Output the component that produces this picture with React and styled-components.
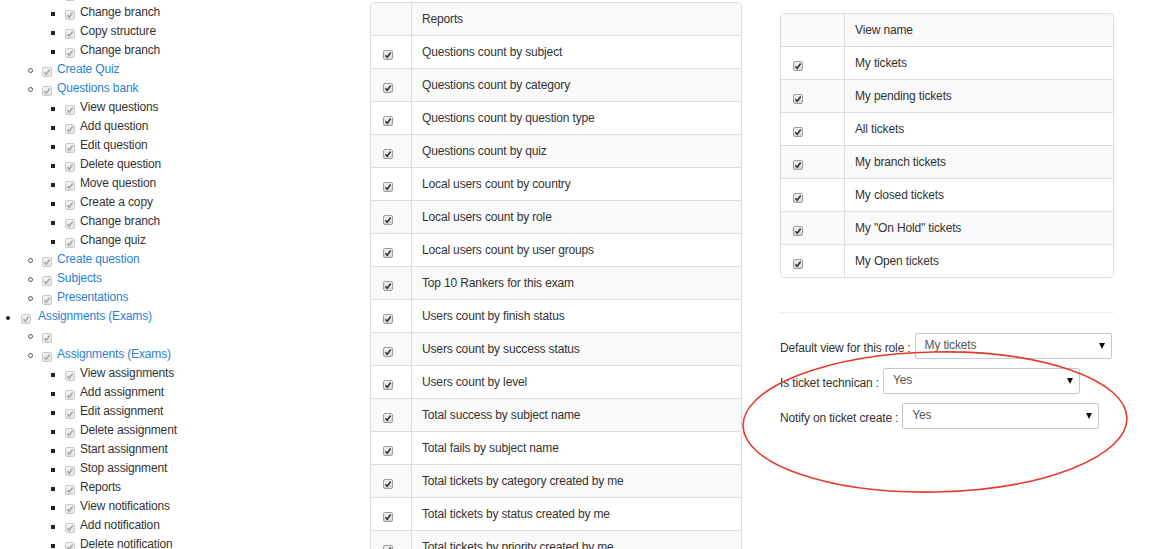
import React from "react";
import styled, { createGlobalStyle } from "styled-components";

const GlobalStyle = createGlobalStyle`
  html, body {
    margin: 0;
    padding: 0;
    background: #fff;
    overflow: hidden;
  }
  body {
    font-family: "Liberation Sans", Arial, sans-serif;
    font-size: 12px;
    letter-spacing: -0.15px;
    color: #333;
  }
`;

const Page = styled.div`
  position: relative;
  display: flex;
  align-items: flex-start;
  width: 1170px;
  height: 549px;
  overflow: hidden;
`;

/* ---------- left permission tree ---------- */

const TreeCol = styled.div`
  width: 370px;
  flex-shrink: 0;
  margin-top: -16px;
`;

const LEVELS = {
  1: { left: 6, size: 4, cb: 11, label: 7 },
  2: { left: 28, size: 5, cb: 9, label: 5 },
  3: { left: 51, size: 4, cb: 10, label: 5 },
};

const TreeRow = styled.div`
  display: flex;
  align-items: center;
  height: 19px;
  padding-left: ${(p) => LEVELS[p.$level].left}px;
`;

const Bullet = styled.span`
  flex-shrink: 0;
  width: ${(p) => LEVELS[p.$level].size}px;
  height: ${(p) => LEVELS[p.$level].size}px;
  margin-top: 2px;
  box-sizing: border-box;
  background: ${(p) => (p.$level === 2 ? "transparent" : "#222")};
  border: ${(p) => (p.$level === 2 ? "1px solid #555" : "none")};
  border-radius: ${(p) => (p.$level === 3 ? "0" : "50%")};
`;

const TreeLabel = styled.span`
  margin-left: ${(p) => LEVELS[p.$level].label}px;
  color: ${(p) => (p.$level === 3 ? "#333" : "#2a80d2")};
  white-space: nowrap;
  line-height: 19px;
`;

const Box = styled.span`
  flex-shrink: 0;
  display: inline-flex;
  align-items: center;
  justify-content: center;
  width: 10px;
  height: 10px;
  box-sizing: border-box;
  margin-top: ${(p) => p.$offset || 5}px;
  margin-left: ${(p) => p.$gap || 0}px;
  border: 1px solid ${(p) => (p.$disabled ? "#c9c9c9" : "#9d9d9d")};
  border-radius: 2px;
  background: ${(p) =>
    p.$disabled
      ? "linear-gradient(#f4f4f4, #e4e4e4)"
      : "linear-gradient(#f2f2f2, #d6d6d6)"};
`;

function Check({ disabled, gap, offset }) {
  return (
    <Box $disabled={disabled} $gap={gap} $offset={offset}>
      <svg width="8" height="8" viewBox="0 0 8 8">
        <path
          d="M1.4 4.3 L3.2 6.2 L6.7 1.6"
          fill="none"
          stroke={disabled ? "#a8a8a8" : "#333"}
          strokeWidth="1.6"
        />
      </svg>
    </Box>
  );
}

// first row sits above the top edge, only its checkbox peeks in
const tree = [
  [3, ""],
  [3, "Change branch"],
  [3, "Copy structure"],
  [3, "Change branch"],
  [2, "Create Quiz"],
  [2, "Questions bank"],
  [3, "View questions"],
  [3, "Add question"],
  [3, "Edit question"],
  [3, "Delete question"],
  [3, "Move question"],
  [3, "Create a copy"],
  [3, "Change branch"],
  [3, "Change quiz"],
  [2, "Create question"],
  [2, "Subjects"],
  [2, "Presentations"],
  [1, "Assignments (Exams)"],
  [2, ""],
  [2, "Assignments (Exams)"],
  [3, "View assignments"],
  [3, "Add assignment"],
  [3, "Edit assignment"],
  [3, "Delete assignment"],
  [3, "Start assignment"],
  [3, "Stop assignment"],
  [3, "Reports"],
  [3, "View notifications"],
  [3, "Add notification"],
  [3, "Delete notification"],
];

/* ---------- tables ---------- */

const MidCol = styled.div`
  width: 372px;
  flex-shrink: 0;
  padding-top: 2px;
`;

const RightCol = styled.div`
  width: 334px;
  flex-shrink: 0;
  margin-left: 38px;
  padding-top: 13px;
`;

const Panel = styled.div`
  border: 1px solid #ddd;
  border-radius: 4px;
  overflow: hidden;
`;

const Table = styled.table`
  width: 100%;
  border-collapse: separate;
  border-spacing: 0;
`;

const Tr = styled.tr`
  background: ${(p) => (p.$striped ? "#f9f9f9" : "#fff")};
  &:first-child td {
    border-top: none;
  }
`;

const Td = styled.td`
  height: 32px;
  padding: 0 10px;
  border-top: 1px solid #ddd;
  vertical-align: middle;
  white-space: nowrap;
  & + & {
    border-left: 1px solid #ddd;
  }
`;

const CheckCell = styled(Td)`
  width: ${(p) => p.$w}px;
  padding: 0 0 0 12px;
  box-sizing: border-box;
  line-height: 0;
`;

function CheckTable({ title, rows, checkWidth }) {
  return (
    <Panel>
      <Table>
        <tbody>
          <Tr $striped>
            <CheckCell $w={checkWidth} />
            <Td>{title}</Td>
          </Tr>
          {rows.map((r, i) => (
            <Tr key={i} $striped={i % 2 === 1}>
              <CheckCell $w={checkWidth}>
                <Check offset={5} />
              </CheckCell>
              <Td>{r}</Td>
            </Tr>
          ))}
        </tbody>
      </Table>
    </Panel>
  );
}

const reports = [
  "Questions count by subject",
  "Questions count by category",
  "Questions count by question type",
  "Questions count by quiz",
  "Local users count by country",
  "Local users count by role",
  "Local users count by user groups",
  "Top 10 Rankers for this exam",
  "Users count by finish status",
  "Users count by success status",
  "Users count by level",
  "Total success by subject name",
  "Total fails by subject name",
  "Total tickets by category created by me",
  "Total tickets by status created by me",
  "Total tickets by priority created by me",
];

const views = [
  "My tickets",
  "My pending tickets",
  "All tickets",
  "My branch tickets",
  "My closed tickets",
  'My "On Hold" tickets',
  "My Open tickets",
];

/* ---------- role settings form ---------- */

const Divider = styled.hr`
  margin: 34px 0 20px;
  border: none;
  border-top: 1px solid #eee;
  height: 0;
`;

const FieldRow = styled.div`
  display: flex;
  align-items: flex-start;
  height: 26px;
  margin-bottom: 9px;
`;

const FieldLabel = styled.span`
  padding-top: 8px;
  line-height: 14px;
  white-space: nowrap;
`;

const Select = styled.div`
  display: flex;
  justify-content: space-between;
  align-items: flex-start;
  width: 197px;
  height: 26px;
  box-sizing: border-box;
  margin-left: 4px;
  padding: 4px 6px 0 9px;
  border: 1px solid #c8c8c8;
  border-radius: 2px;
  background: #fff;
  color: #555;
  line-height: 14px;
`;

const Arrow = styled.span`
  margin-top: 5px;
  width: 0;
  height: 0;
  border-left: 3.5px solid transparent;
  border-right: 3.5px solid transparent;
  border-top: 6px solid #111;
`;

const Ring = styled.svg`
  position: absolute;
  left: 737px;
  top: 346px;
  pointer-events: none;
`;

export default function App() {
  return (
    <>
      <GlobalStyle />
      <Page>
        <TreeCol>
          {tree.map(([level, label], i) => (
            <TreeRow key={i} $level={level}>
              <Bullet $level={level} />
              <Check disabled gap={LEVELS[level].cb} offset={5} />
              <TreeLabel $level={level}>{label}</TreeLabel>
            </TreeRow>
          ))}
        </TreeCol>

        <MidCol>
          <CheckTable title="Reports" rows={reports} checkWidth={40} />
        </MidCol>

        <RightCol>
          <CheckTable title="View name" rows={views} checkWidth={63} />
          <Divider />
          <FieldRow>
            <FieldLabel>Default view for this role :</FieldLabel>
            <Select>
              <span>My tickets</span>
              <Arrow />
            </Select>
          </FieldRow>
          <FieldRow>
            <FieldLabel>Is ticket technican :</FieldLabel>
            <Select>
              <span>Yes</span>
              <Arrow />
            </Select>
          </FieldRow>
          <FieldRow>
            <FieldLabel>Notify on ticket create :</FieldLabel>
            <Select>
              <span>Yes</span>
              <Arrow />
            </Select>
          </FieldRow>
        </RightCol>

        <Ring width="400" height="156" viewBox="0 0 400 156">
          <ellipse
            cx="198"
            cy="76"
            rx="192"
            ry="70"
            fill="none"
            stroke="#e63a2e"
            strokeWidth="1.6"
            transform="rotate(-1.2 198 76)"
          />
        </Ring>
      </Page>
    </>
  );
}
